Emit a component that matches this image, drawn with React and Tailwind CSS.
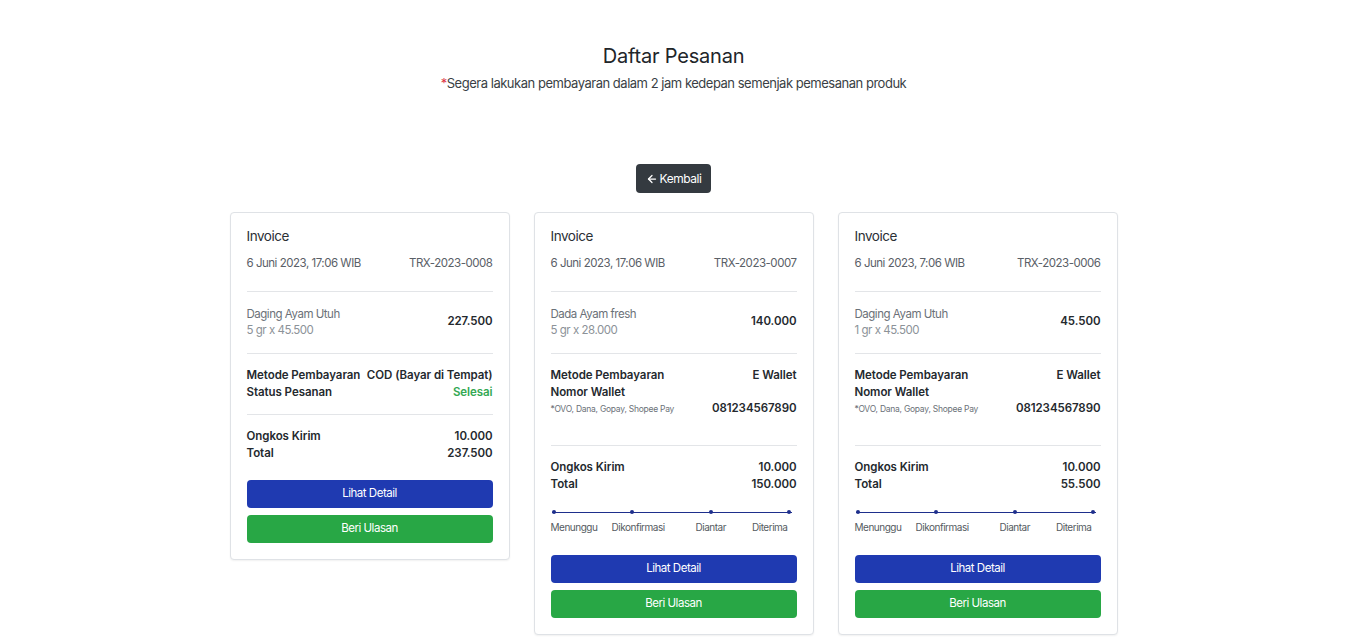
import React from 'react';
import { ArrowLeft } from 'lucide-react';

const orders = [
  {
    date: '6 Juni 2023, 17:06 WIB',
    code: 'TRX-2023-0008',
    item: 'Daging Ayam Utuh',
    qty: '5 gr x 45.500',
    subtotal: '227.500',
    method: 'COD (Bayar di Tempat)',
    cod: true,
    ongkir: '10.000',
    total: '237.500',
  },
  {
    date: '6 Juni 2023, 17:06 WIB',
    code: 'TRX-2023-0007',
    item: 'Dada Ayam fresh',
    qty: '5 gr x 28.000',
    subtotal: '140.000',
    method: 'E Wallet',
    wallet: '081234567890',
    ongkir: '10.000',
    total: '150.000',
  },
  {
    date: '6 Juni 2023, 7:06 WIB',
    code: 'TRX-2023-0006',
    item: 'Daging Ayam Utuh',
    qty: '1 gr x 45.500',
    subtotal: '45.500',
    method: 'E Wallet',
    wallet: '081234567890',
    ongkir: '10.000',
    total: '55.500',
  },
];

const Divider = ({ className = '' }) => <div className={`h-px bg-[#e3e5e8] ${className}`} />;

const Progress = () => (
  <div className="mt-[17px]">
    <div className="relative h-[4px] ml-[1px] mr-[5px]">
      <div className="absolute left-0 right-0 top-[1.5px] h-px bg-[#1e2f8c]" />
      <div className="flex justify-between">
        {[0, 1, 2, 3].map((i) => (
          <span key={i} className="w-[4px] h-[4px] rounded-full bg-[#1e2f8c]" />
        ))}
      </div>
    </div>
    <div className="flex mt-[6px] text-[10px] leading-[14px] text-[#555b61]">
      <span className="w-[61px]">Menunggu</span>
      <span className="w-[84px]">Dikonfirmasi</span>
      <span className="w-[54px]">Diantar</span>
      <span className="flex-1 text-right pr-[9px]">Diterima</span>
    </div>
  </div>
);

const OrderCard = ({ order }) => (
  <div className="w-[280px] bg-white border border-[#dfe2e6] rounded-[4px] shadow-[0_1px_2px_rgba(0,0,0,0.06)] px-4 pt-[13px] pb-4">
    <div className="text-[13.5px] leading-5 text-[#2b3036]">Invoice</div>
    <div className="mt-[9px] flex justify-between text-[11.5px] leading-4 text-[#5a6067]">
      <span>{order.date}</span>
      <span>{order.code}</span>
    </div>
    <Divider className="mt-[20px]" />
    <div className="mt-[14px] flex justify-between items-center">
      <div className="text-[11.5px] leading-4">
        <div className="text-[#6b7178]">{order.item}</div>
        <div className="text-[#8c9298]">{order.qty}</div>
      </div>
      <div className="text-[11.5px] font-semibold tracking-[-0.005em] text-[#24292e]">{order.subtotal}</div>
    </div>
    <Divider className="mt-[15px]" />
    <div className="mt-[13px] text-[11.5px] leading-[17px] font-semibold tracking-[-0.005em] text-[#24292e] whitespace-nowrap">
      <div className="flex justify-between">
        <span>Metode Pembayaran</span>
        <span>{order.method}</span>
      </div>
      {order.cod ? (
        <div className="flex justify-between">
          <span>Status Pesanan</span>
          <span className="text-[#34a853]">Selesai</span>
        </div>
      ) : (
        <div className="flex justify-between items-end">
          <div>
            <div>Nomor Wallet</div>
            <div className="text-[8.5px] leading-[16px] font-normal tracking-[-0.03em] text-[#6b7178]">*OVO, Dana, Gopay, Shopee Pay</div>
          </div>
          <span>{order.wallet}</span>
        </div>
      )}
    </div>
    <Divider className={order.cod ? 'mt-[13px]' : 'mt-[28px]'} />
    <div className="mt-[13px] text-[11.5px] leading-[17px] font-semibold tracking-[-0.005em] text-[#24292e]">
      <div className="flex justify-between">
        <span>Ongkos Kirim</span>
        <span>{order.ongkir}</span>
      </div>
      <div className="flex justify-between">
        <span>Total</span>
        <span>{order.total}</span>
      </div>
    </div>
    {order.cod ? <div className="h-[17px]" /> : (
      <>
        <Progress />
        <div className="h-[20px]" />
      </>
    )}
    <button className="w-full h-[28px] rounded-[4px] bg-[#1f3ab1] text-white text-[11.5px]">Lihat Detail</button>
    <button className="w-full h-[28px] mt-[7px] rounded-[4px] bg-[#28a745] text-white text-[11.5px]">Beri Ulasan</button>
  </div>
);

export default function App() {
  return (
    <div className="min-h-screen bg-white font-['Inter',sans-serif] tracking-[-0.03em] pt-[42px] pb-6">
      <div className="text-center">
        <h1 className="text-xl leading-7 text-[#212529] tracking-[-0.01em]">Daftar Pesanan</h1>
        <p className="text-[13px] leading-5 text-[#3a3f45] mt-[3px]">
          <span className="text-[#dc3545]">*</span>Segera lakukan pembayaran dalam 2 jam kedepan semenjak pemesanan produk
        </p>
      </div>
      <div className="flex justify-center mt-[71px]">
        <button className="h-[29px] w-[75px] rounded-[4px] bg-[#343a40] text-white text-xs flex items-center justify-center gap-[2px]">
          <ArrowLeft size={12} strokeWidth={2.5} />
          Kembali
        </button>
      </div>
      <div className="flex justify-center items-start gap-6 mt-[19px]">
        {orders.map((o) => (
          <OrderCard key={o.code} order={o} />
        ))}
      </div>
    </div>
  );
}
